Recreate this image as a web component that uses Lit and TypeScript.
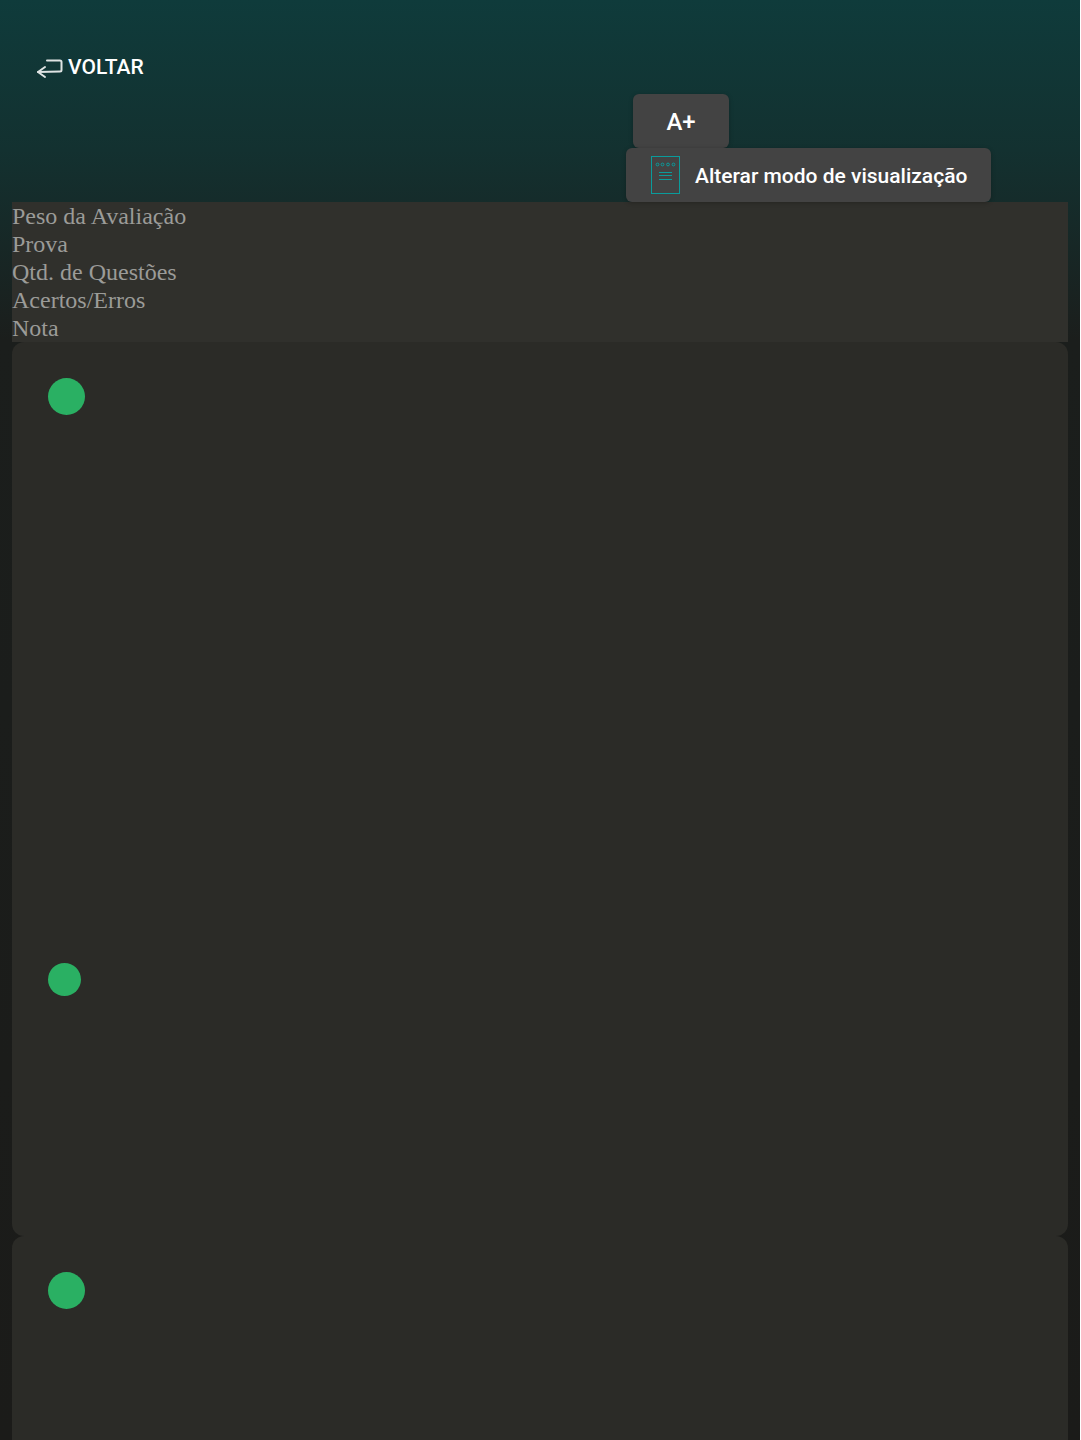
import { LitElement, html, css } from "lit";
import { customElement } from "lit/decorators.js";

@customElement("app-root")
export class AppRoot extends LitElement {
  static styles = css`
    :host { display: block; background: #fff; }
    .page {
      width: 1080px; height: 1440px; overflow: hidden; box-sizing: border-box;
      background: linear-gradient(180deg, #0f3b3b 0px, #133130 150px, #1b1e1c 340px, #1b1b19 100%);
    }
    .header { height: 202px; box-sizing: border-box; padding-top: 55px; display: flex; flex-direction: column; }
    .back {
      display: flex; align-items: center; gap: 4px; margin-left: 36px; height: 24px;
      font: 500 21px/24px Roboto, sans-serif; color: #fff;
    }
    .back svg { display: block; width: 28px; height: 24px; }
    .tools { margin: 15px 0 0 626px; width: 365px; display: flex; flex-direction: column; align-items: flex-start; }
    .btn { background: #434343; color: #fff; font-family: Roboto, sans-serif; font-weight: 500; box-sizing: border-box; box-shadow: 0 1px 4px rgba(0,0,0,.25); }
    .font { margin-left: 7px; width: 96px; height: 54px; border-radius: 6px; font-size: 24px; line-height: 56px; text-align: center; }
    .mode { position: relative; width: 365px; height: 54px; border-radius: 6px; font-size: 21px; display: flex; align-items: center; padding-left: 25px; gap: 14px; }
    .mode svg { display: block; width: 30px; height: 39px; }
    .label { padding-top: 1px; }
    .main { padding: 0 12px; display: flex; flex-direction: column; }
    .summary { background: #30302c; color: #9b9b98; font: 24px/28px "Liberation Serif", serif; height: 140px; }
    .card { background: #2b2b27; border-radius: 12px; padding: 36px; box-sizing: border-box; flex: none; }
    .first { height: 894px; }
    .last { height: 300px; }
    .dot { background: #2ab063; border-radius: 50%; width: 37.4px; height: 37.4px; }
    .small { width: 33px; height: 33px; margin-top: 547.6px; }
  `;

  render() {
    return html`<div class="page">
      <div class="header">
        <div class="back">
          <svg viewBox="0 0 28 24" fill="none" stroke="#dfe3e3" stroke-width="2" stroke-linecap="round" stroke-linejoin="round">
            <path d="M11 5.5H24a1.5 1.5 0 0 1 1.5 1.5V15a1.5 1.5 0 0 1-1.5 1.5L2 17" />
            <path d="M9 12 2 17 9 22" />
          </svg>
          <span>VOLTAR</span>
        </div>
        <div class="tools">
          <div class="btn font">A+</div>
          <div class="btn mode">
            <svg viewBox="0 0 30 39" fill="none" stroke="#0a9c9c">
              <rect x="0.5" y="0.5" width="28" height="37" />
              <circle cx="6.5" cy="8.5" r="1.4" /><circle cx="11.5" cy="8.5" r="1.4" /><circle cx="17" cy="8.5" r="1.4" /><circle cx="22.5" cy="8.5" r="1.4" />
              <path d="M8 16.5H21M8 19.5H21M8 23.5H21" />
            </svg>
            <span class="label">Alterar modo de visualização</span>
          </div>
        </div>
      </div>
      <div class="main">
        <div class="summary">
          <div>Peso da Avaliação</div>
          <div>Prova</div>
          <div>Qtd. de Questões</div>
          <div>Acertos/Erros</div>
          <div>Nota</div>
        </div>
        <div class="card first">
          <div class="dot"></div>
          <div class="dot small"></div>
        </div>
        <div class="card last">
          <div class="dot"></div>
        </div>
      </div>
    </div>`;
  }
}
